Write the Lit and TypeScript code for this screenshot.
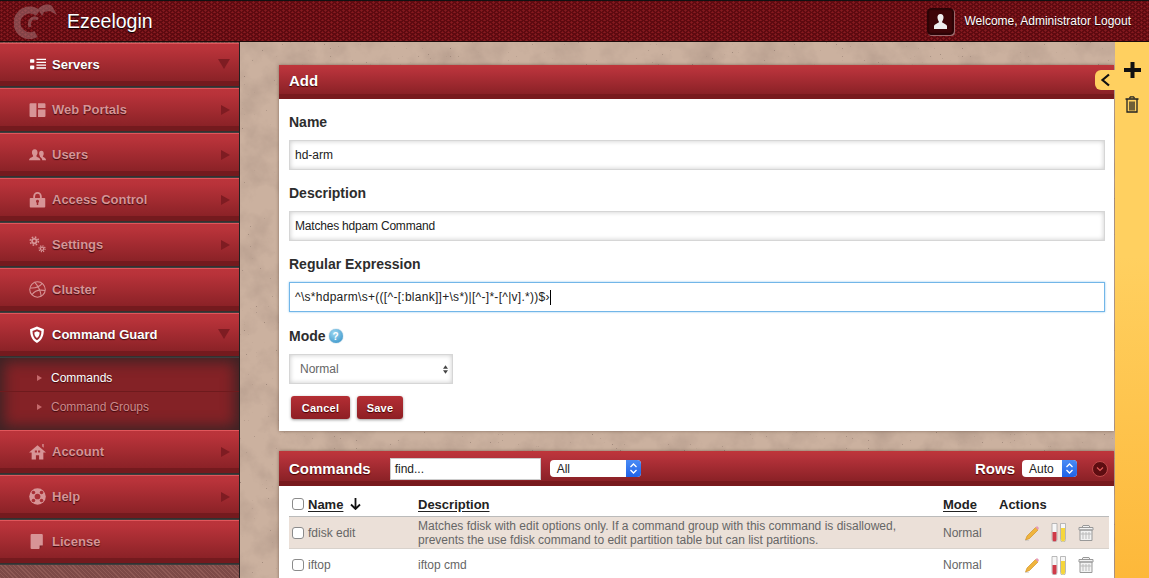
import { LitElement, html, css, svg } from "lit";
import { customElement } from "lit/decorators.js";

const icons: Record<string, any> = {
  servers: svg`<rect x="1" y="3" width="4" height="3.4" rx=".8"/><rect x="1" y="9" width="4" height="3.4" rx=".8"/><path d="M7 2.6h10v1.2H7zM7 5.3h10v1.2H7zM7 8h10v1.2H7zM7 10.7h10v1.2H7z"/>`,
  portals: svg`<path d="M1.5 2h5.5v13h-5.5a1 1 0 0 1-1-1V3a1 1 0 0 1 1-1zM8.5 2h6a1 1 0 0 1 1 1v3.5h-7zM8.5 8h7v6a1 1 0 0 1-1 1h-6z"/>`,
  users: svg`<path d="M0 13.5c.3-2.5 2.5-2.7 3.8-3.6.2-.6-.1-1-.6-1.8-.8-1.6-.7-5 2.2-5s3 3.4 2.2 5c-.5.8-.8 1.2-.6 1.8 1.3.9 3.5 1.1 3.8 3.6zM12.5 13.5c-.2-1.6-1-2.5-2.3-3.3.3-.5.1-.8-.3-1.5-.7-1.4-.6-4.2 1.8-4.2 2.3 0 2.5 2.8 1.8 4.2-.4.7-.6 1-.4 1.5 1 .7 2.8.8 3 3.3z"/>`,
  lock: svg`<path fill-rule="evenodd" d="M4 6.5V5a4 4 0 0 1 8 0v1.5h2.5a.8.8 0 0 1 .8.8v7.4a.8.8 0 0 1-.8.8H1.5a.8.8 0 0 1-.8-.8V7.3a.8.8 0 0 1 .8-.8zM5.7 6.5h4.6V5a2.3 2.3 0 0 0-4.6 0zM8 8.3a1.5 1.5 0 0 0-.7 2.8v2h1.4v-2A1.5 1.5 0 0 0 8 8.3z"/>`,
  gears: svg`<g fill="none" stroke="currentColor"><circle cx="5" cy="4.8" r="2.1" stroke-width="1.7"/><circle cx="5" cy="4.8" r="3.8" stroke-width="1.5" stroke-dasharray="1.5 1.49"/><circle cx="12.3" cy="12" r="1.5" stroke-width="1.2"/><circle cx="12.3" cy="12" r="2.8" stroke-width="1.2" stroke-dasharray="1.1 1.1"/></g>`,
  ball: svg`<g fill="none" stroke="currentColor" stroke-width="1"><circle cx="8" cy="8" r="7.3"/><path d="M5.5 1.2C8.5 4.5 11 9.5 11.5 14.5M1 6.5c4.5.5 8.5-.8 11.5-4.3M2.8 13C5 9.5 9.5 7.8 15.2 9"/></g>`,
  shield: svg`<path fill-rule="evenodd" d="M7.5.5 14 3c0 6-1.5 10-6.500 13C2.500 13 1 9 1 3zM7.500 3 3.300 4.600c0 4 1.200 6.800 4.200 8.900 3-2.100 4.200-4.900 4.200-8.900z"/><path d="M7.500 5 5 6c0 2.500.8 4 2.500 5.300C9.200 10 10 8.500 10 6z"/>`,
  home: svg`<path d="M8 2 0 9h2.5v6.500H6.500v-4h3v4H13.500V9H16zM12.500 1h1.300v3.500l-1.300-1.100z"/><path d="M5.500 7h2v2h-2zM8.500 7h2v2h-2z" fill="#a83036"/>`,
  help: svg`<circle cx="8" cy="8" r="7.800"/><g fill="#a83036"><circle cx="8" cy="8" r="2.700"/><circle cx="4.200" cy="4.200" r="1.700"/><circle cx="11.800" cy="4.200" r="1.700"/><circle cx="4.200" cy="11.800" r="1.700"/><circle cx="11.800" cy="11.800" r="1.700"/></g>`,
  file: svg`<path d="M2.500 1h9.500a1 1 0 0 1 1 1v9.500L9.500 15H2.500a1 1 0 0 1-1-1V2a1 1 0 0 1 1-1z"/><path d="M10 15v-3.200h3z" fill="#7a1d22"/>`,
};

@customElement("app-root")
export class AppRoot extends LitElement {
  static styles = css`
    :host { display: block; width: 1149px; height: 578px; overflow: hidden; font-family: "Liberation Sans", Arial, sans-serif; color: #333; }
    * { box-sizing: border-box; }
    .top { height: 42px; display: flex; align-items: center; border-top: 1px solid #111; border-bottom: 1px solid #1c0a0a;
      background-color: #5e0a10;
      background-image: radial-gradient(circle at 1.5px 1.5px, #861a20 .9px, transparent 1.3px), radial-gradient(circle at 4.5px 3.5px, #861a20 .9px, transparent 1.3px);
      background-size: 6px 4px, 6px 4px; }
    .logo { margin-left: 14px; width: 44px; height: 36px; flex: none; }
    .brand { margin-left: 9px; color: #fff; font-size: 19.5px; text-shadow: 0 1px 1px #000; }
    .welcome { margin-left: auto; display: flex; align-items: center; gap: 10px; padding-right: 18px; color: #fff; font-size: 12px; text-shadow: 0 1px 1px #200; }
    .avatar { width: 27px; height: 27px; border: 1px solid #2b0407; border-radius: 4px; background: #3d0508; box-shadow: 0 0 2px #000 inset, 1px 1px 0 #9a6a6c; display: grid; place-items: center; }
    .body { display: grid; grid-template-columns: 240px 875px 34px; height: 536px; }
    .side { padding-top: 1px; background: repeating-linear-gradient(45deg, #8f5a55 0 1px, #7d4a47 1px 3px); border-right: 1px solid #262020; overflow: hidden; }
    .item { height: 45px; display: flex; align-items: center; position: relative; padding: 0 0 0 29px; gap: 6px; color: #d79496; font-weight: bold; font-size: 13px; text-shadow: 0 1px 1px #3d0a0d;
      background: linear-gradient(#bb343b, #bb343b 2px, #b9333a 6px, #8b2227 38px, #741a1e 38px, #741a1e 43px, #2e2a2a 43px, #444 45px);
      box-shadow: inset 0 1px 0 #e0565b; }
    .item.on { color: #fff; }
    .item svg { width: 17px; height: 17px; flex: none; fill: currentColor; margin-top: -2px; }
    .item span { margin-top: -2px; }
    .arrow { position: absolute; width: 0; height: 0; top: 17px; right: 9px; border-left: 9px solid #7e1c22; border-top: 5px solid transparent; border-bottom: 5px solid transparent; }
    .arrow.down { top: 16px; right: 9px; border-top: 10px solid #7e1c22; border-left: 6px solid transparent; border-right: 6px solid transparent; border-bottom: 0; }
    .sub { height: 72px; background: #842226; box-shadow: inset 0 0 14px 4px #3c2325; }
    .sub div { height: 30px; display: flex; align-items: center; padding-left: 37px; gap: 9px; font-size: 12px; color: #cf8a8c; text-shadow: 0 1px 1px #3d0a0d; }
    .sub div:first-child { height: 34px; padding-top: 6px; color: #fff; border-bottom: 1px solid #6e1a1d; }
    .sub i { width: 0; height: 0; border-left: 5px solid #c56a6c; border-top: 3px solid transparent; border-bottom: 3px solid transparent; }
    .main { position: relative; background: #cbb19f; padding: 23px 0 0 39px; overflow: hidden; }
    .tex { position: absolute; inset: 0; width: 100%; height: 100%; }
    .panel { position: relative; background: #fff; width: 835px; box-shadow: 0 0 3px rgba(60, 40, 30, .5); }
    .phead { height: 34px; display: flex; align-items: center; padding: 0 10px 3px; color: #fff; font-weight: bold; font-size: 15px; text-shadow: 0 1px 1px #400;
      background: linear-gradient(#bf353a, #b5323a 6px, #8a2126 29px, #781a1d 29px); }
    .form { padding: 14px 10px 12px; height: 332px; }
    label { display: flex; align-items: center; gap: 3px; font-weight: bold; font-size: 14px; color: #2d2d2d; height: 18px; margin-bottom: 9px; }
    .inp { display: flex; align-items: center; width: 816px; height: 30px; padding: 0 5px; margin-bottom: 14px; border: 1px solid #d6d6d6; font-size: 12px; color: #222; background: #fff; box-shadow: inset 0 0 5px #c9c9c9; }
    .inp.tight { letter-spacing: -.2px; }
    .inp.focus { border: 1.5px solid #72b6e8; box-shadow: 0 0 2px #8ec8f0; margin-bottom: 15px; letter-spacing: .28px; }
    .caret { width: 1px; height: 15px; background: #000; }
    .help { width: 14px; height: 14px; border-radius: 50%; background: radial-gradient(circle at 40% 30%, #9ed8f2, #2c8cc4); color: #fff; font-size: 10px; display: grid; place-items: center; box-shadow: 0 0 1px #2070a0; }
    .sel { display: flex; align-items: center; justify-content: space-between; width: 164px; height: 30px; padding: 0 4px 0 10px; border: 1px solid #d6d6d6; font-size: 12px; color: #666; box-shadow: inset 0 0 5px #c9c9c9; margin-bottom: 12px; }
    .updown { width: 5px; height: 11px; }
    .btns { display: flex; gap: 7px; padding-left: 2px; }
    .btn { height: 23px; display: grid; place-items: center; border-radius: 3px; color: #fff; font-weight: bold; font-size: 11px; letter-spacing: .2px; background: linear-gradient(#b42e34, #8e1f24); box-shadow: 0 1px 3px rgba(0,0,0,.4); text-shadow: 0 1px 1px #400; }
    .cancel { width: 59px; } .save { width: 46px; }
    .list { margin-top: 20px; height: 200px; }
    .lhead { height: 35px; font-size: 15px; padding: 0 6px 0 10px; background: linear-gradient(#bf353a, #b5323a 6px, #8a2126 30px, #781a1d 30px); }
    .find { margin-left: 19px; width: 151px; height: 22px; background: #fff; border: 1px solid #ccc; font: 12px "Liberation Sans", sans-serif; color: #222; display: flex; align-items: center; padding-left: 4px; text-shadow: none; }
    .mac { display: flex; align-items: center; height: 17px; background: #fff; border-radius: 4px; color: #222; font-weight: normal; font-size: 12px; padding-left: 7px; text-shadow: none; position: relative; overflow: hidden; }
    .mac b { position: absolute; right: 0; top: 0; width: 15px; height: 17px; background: linear-gradient(#4a8cf5, #1f62e8); display: grid; place-items: center; }
    .all { margin-left: 9px; width: 91px; }
    .rows { margin-left: auto; margin-right: 7px; }
    .auto { width: 55px; }
    .dot { margin-left: 15px; width: 16px; height: 16px; border-radius: 50%; background: #5d0d11; border: 1px solid #c04a4a; display: grid; place-items: center; }
    .tbl { padding: 0 5px 0 10px; font-size: 12px; color: #666; }
    .row { display: grid; grid-template-columns: 16px 110px 525px 56px 1fr; align-items: center; padding-left: 3px; }
    .row.h { height: 31px; padding-top: 6px; color: #222; font-weight: bold; font-size: 13px; border-bottom: 1px solid #bbb; }
    .row.h u { text-underline-offset: 2px; }
    .row.h .nm { display: flex; align-items: center; gap: 7px; }
    .row.a { height: 32px; background: #ebe0d8; border-bottom: 1px solid #d8d2cc; line-height: 14px; font-size: 12px; }
    .row.b { height: 32px; }
    .cb { width: 12px; height: 12px; border: 1px solid #8b8b8b; border-radius: 3px; background: #fff; }
    .acts { display: flex; align-items: center; gap: 11px; padding-left: 25px; }
    .acts svg { flex: none; }
    .tools { display: flex; flex-direction: column; align-items: center; padding-top: 20px; gap: 18px; background: linear-gradient(#ffd060, #ffd060 40%, #fdb83a); position: relative; }
    .tab { position: absolute; left: -20px; top: 28px; width: 20px; height: 20px; background: #ffd060; border-radius: 6px 0 0 6px; display: grid; place-items: center; }
  `;

  private nav(icon: string, label: string, on = false, arrow = "r") {
    return html`<div class="item ${on ? "on" : ""}">
      <svg viewBox="0 0 16 16">${icons[icon]}</svg><span>${label}</span>
      ${arrow ? html`<i class="arrow ${arrow === "d" ? "down" : ""}"></i>` : ""}
    </div>`;
  }

  private actions() {
    return html`<div class="acts">
      <svg width="16" height="16" viewBox="0 0 16 16"><path d="M1.5 15 3 11 11.5 2.5 14 5 5.5 13.5z" fill="#f0b43c" stroke="#c98a1e" stroke-width=".6"/><path d="M11.5 2.5 13 1l2 2-1 2z" fill="#e79ab8"/><path d="M1 16h4" stroke="#bbb"/></svg>
      <svg width="16" height="19" viewBox="0 0 16 19"><g fill="#f7f7f7" stroke="#aaa" stroke-width=".8"><path d="M1 .5h5v16a2.5 2.5 0 0 1-5 0z"/><path d="M9.5.5h5v16a2.5 2.5 0 0 1-5 0z"/></g><path d="M1.5 9h4v7.5a2 2 0 0 1-4 0z" fill="#cf3a48"/><path d="M10 5h4v11.5a2 2 0 0 1-4 0z" fill="#f5d63c"/></svg>
      <svg width="16" height="18" viewBox="0 0 16 18" fill="none" stroke="#999"><path d="M5 1.500h6l1 2H4zM1 3.500h14v2.500H1zM2 6v10.500h12V6z" fill="#f2f2f2"/><path d="M5 8v7M8 8v7M11 8v7M2 10h12" stroke="#bbb"/></svg>
    </div>`;
  }

  private updown(c = "#fff") {
    return html`<svg width="9" height="13" viewBox="0 0 9 13" fill="none" stroke="${c}" stroke-width="1.3"><path d="M1.5 5 4.5 2l3 3M1.5 8l3 3 3-3"/></svg>`;
  }

  render() {
    return html`
      <div class="top">
        <svg class="logo" viewBox="0 0 44 36" fill="none" stroke="#b08a8c" opacity=".45"><path d="M24 10A12.800 12.800 0 1 0 22 31" stroke-width="7"/><path d="M24 6c3-4 10-6 14-3l5 9-7-4-6 1-2 4z" fill="#b08a8c" stroke="none"/><path d="M24 16c-6-3-10 2-8 8" stroke-width="3"/></svg>
        <span class="brand">Ezeelogin</span>
        <div class="welcome">
          <div class="avatar"><svg width="13" height="15" viewBox="0 0 13 15"><path d="M6.5 0c2.3 0 3.300 1.800 3 4-.3 2-1 3-1.500 3.800 0 1.400 4 1.700 5 4.200v3H0v-3c1-2.500 5-2.800 5-4.200C4.500 7 3.800 6 3.500 4c-.3-2.200.7-4 3-4z" fill="#eee"/></svg></div>
          <span>Welcome, Administrator Logout</span>
        </div>
      </div>
      <div class="body">
        <nav class="side">
          ${this.nav("servers", "Servers", true, "d")}
          ${this.nav("portals", "Web Portals")}
          ${this.nav("users", "Users")}
          ${this.nav("lock", "Access Control")}
          ${this.nav("gears", "Settings")}
          ${this.nav("ball", "Cluster", false, "")}
          ${this.nav("shield", "Command Guard", true, "d")}
          <div class="sub"><div><i></i>Commands</div><div><i></i>Command Groups</div></div>
          ${this.nav("home", "Account")}
          ${this.nav("help", "Help")}
          ${this.nav("file", "License", false, "")}
        </nav>
        <main class="main">
          <svg class="tex">
            <filter id="m"><feTurbulence type="fractalNoise" baseFrequency=".035" numOctaves="6" seed="7"/><feColorMatrix values="0 0 0 0 .42 0 0 0 0 .3 0 0 0 0 .24 1.200 0 0 0 -.48"/></filter>
            <filter id="s"><feTurbulence type="fractalNoise" baseFrequency=".5" numOctaves="2" seed="11"/><feColorMatrix values="0 0 0 0 .22 0 0 0 0 .15 0 0 0 0 .12 6 0 0 0 -4.500"/></filter>
            <rect width="100%" height="100%" filter="url(#m)"/><rect width="100%" height="100%" filter="url(#s)"/>
          </svg>
          <section class="panel">
            <div class="phead">Add</div>
            <div class="form">
              <label>Name</label>
              <div class="inp">hd-arm</div>
              <label>Description</label>
              <div class="inp tight">Matches hdpam Command</div>
              <label>Regular Expression</label>
              <div class="inp focus">^\\s*hdparm\\s+(([^-[:blank]]+\\s*)|[^-]*-[^|v].*))$›<span class="caret"></span></div>
              <label>Mode <span class="help">?</span></label>
              <div class="sel">Normal <svg class="updown" viewBox="0 0 7 12" fill="#444"><path d="M3.5 0 7 5H0zM0 7h7l-3.5 5z"/></svg></div>
              <div class="btns"><div class="btn cancel">Cancel</div><div class="btn save">Save</div></div>
            </div>
          </section>
          <section class="panel list">
            <div class="phead lhead">
              <span>Commands</span>
              <div class="find">find...</div>
              <div class="mac all">All<b>${this.updown()}</b></div>
              <span class="rows">Rows</span>
              <div class="mac auto">Auto<b>${this.updown()}</b></div>
              <div class="dot"><svg width="8" height="6" viewBox="0 0 8 6" fill="none" stroke="#e05a5a" stroke-width="1.2"><path d="M1 1.500 4 4.500l3-3"/></svg></div>
            </div>
            <div class="tbl">
              <div class="row h">
                <div class="cb"></div>
                <div class="nm"><u>Name</u><svg width="11" height="12" viewBox="0 0 11 12" fill="none" stroke="#111" stroke-width="1.8"><path d="M5.500 0v11M1 6.500l4.500 4.500L10 6.500"/></svg></div>
                <div><u>Description</u></div>
                <div><u>Mode</u></div>
                <div>Actions</div>
              </div>
              <div class="row a">
                <div class="cb"></div><div>fdisk edit</div>
                <div>Matches fdisk with edit options only. If a command group with this command is disallowed,<br />prevents the use fdisk command to edit partition table but can list partitions.</div>
                <div>Normal</div>${this.actions()}
              </div>
              <div class="row b">
                <div class="cb"></div><div>iftop</div><div>iftop cmd</div><div>Normal</div>${this.actions()}
              </div>
            </div>
          </section>
        </main>
        <aside class="tools">
          <div class="tab"><svg width="11" height="14" viewBox="0 0 11 14" fill="none" stroke="#111" stroke-width="2.2"><path d="M9 1.5 2.5 7 9 12.5"/></svg></div>
          <svg width="17" height="16" viewBox="0 0 17 16" fill="#111"><path d="M6.500 0h4v6H17v4h-6.500v6h-4v-6H0V6h6.500z"/></svg>
          <svg width="14" height="17" viewBox="0 0 14 17" fill="none" stroke="#222" stroke-width="1.3"><path d="M4.500 2 5.500.8h3l1 1.200M.5 3h13M2 3.500V16h10V3.500M5 5.500v9M7 5.500v9M9 5.500v9"/></svg>
        </aside>
      </div>`;
  }
}
